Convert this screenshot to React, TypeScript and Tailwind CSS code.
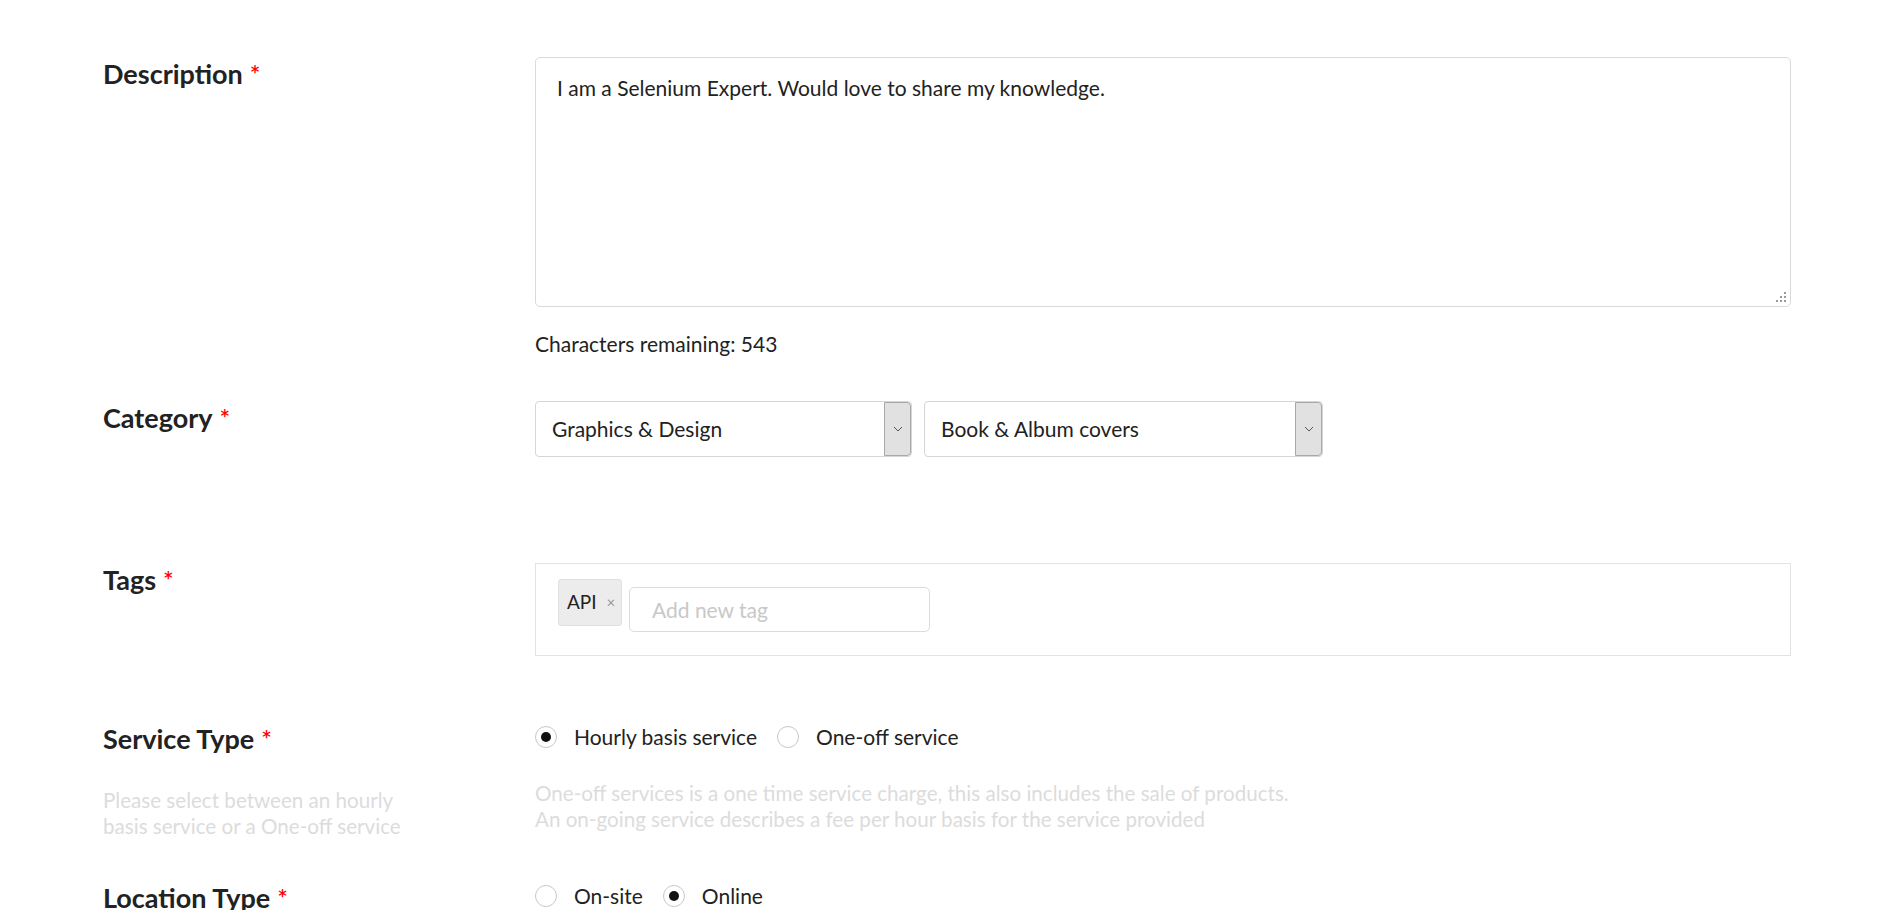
import React from "react";

const font = { fontFamily: "Lato, 'Open Sans', sans-serif" };

function Label({ text }: { text: string }) {
  return (
    <div className="w-[432px] shrink-0 text-[27px] leading-[34px] font-bold text-[#222]">
      {text}
      <span className="ml-[7px] text-[25px] leading-[34px] font-semibold text-[#ff0000]">*</span>
    </div>
  );
}

function Radio({ checked }: { checked: boolean }) {
  return (
    <span className="flex h-[22px] w-[22px] shrink-0 items-center justify-center rounded-full border border-[#c8c8c8] bg-white">
      {checked && <span className="h-[10px] w-[10px] rounded-full bg-[#111]" />}
    </span>
  );
}

function Chevron() {
  return (
    <svg width="10" height="6" viewBox="0 0 10 6" fill="none">
      <path d="M1 1l4 4 4-4" stroke="#555" strokeWidth="1" />
    </svg>
  );
}

function Select({ text, width }: { text: string; width: string }) {
  return (
    <div className={`flex h-[56px] ${width} items-stretch rounded-[4px] border border-[#d6d6d6] bg-white`}>
      <div className="flex flex-1 items-center pl-[16px] text-[21px] text-[#222]">{text}</div>
      <div className="flex w-[27px] items-center justify-center rounded-r-[4px] border border-[#a8a8a8] bg-[#e1e1e1]">
        <Chevron />
      </div>
    </div>
  );
}

export default function App() {
  return (
    <div className="min-h-[910px] bg-white pl-[103px] pt-[57px]" style={font}>
      {/* Description */}
      <div className="flex">
        <Label text="Description" />
        <div className="w-[1256px]">
          <div className="relative h-[250px] rounded-[5px] border border-[#dadada] bg-white pl-[21px] pt-[16px] text-[21px] leading-[28px] text-[#222]">
            I am a Selenium Expert. Would love to share my knowledge.
            <svg className="absolute bottom-[3px] right-[3px]" width="11" height="11" viewBox="0 0 11 11">
              <rect x="8" y="0" width="2" height="2" fill="#9a9a9a" />
              <rect x="4" y="4" width="2" height="2" fill="#9a9a9a" />
              <rect x="8" y="4" width="2" height="2" fill="#9a9a9a" />
              <rect x="0" y="8" width="2" height="2" fill="#9a9a9a" />
              <rect x="4" y="8" width="2" height="2" fill="#9a9a9a" />
              <rect x="8" y="8" width="2" height="2" fill="#9a9a9a" />
            </svg>
          </div>
          <div className="mt-[23px] text-[21px] leading-[28px] text-[#222]">Characters remaining: 543</div>
        </div>
      </div>

      {/* Category */}
      <div className="mt-[43px] flex">
        <Label text="Category" />
        <div className="flex gap-[12px]">
          <Select text="Graphics & Design" width="w-[377px]" />
          <Select text="Book & Album covers" width="w-[399px]" />
        </div>
      </div>

      {/* Tags */}
      <div className="mt-[106px] flex">
        <Label text="Tags" />
        <div className="flex h-[93px] w-[1256px] items-start gap-[7px] border border-[#e3e3e3] bg-white pl-[22px] pt-[15px]">
          <div className="flex h-[47px] w-[64px] items-center gap-[10px] rounded-[3px] border border-[#e0e0e0] bg-[#ececec] pl-[8px] text-[19px] text-[#222]">
            API
            <span className="text-[15px] text-[#999]">×</span>
          </div>
          <div className="mt-[8px] flex h-[45px] w-[301px] items-center rounded-[5px] border border-[#dcdcdc] bg-white pl-[22px] text-[21px] text-[#c8c8c8]">
            Add new tag
          </div>
        </div>
      </div>

      {/* Service Type */}
      <div className="mt-[66px] flex">
        <div className="w-[432px] shrink-0">
          <Label text="Service Type" />
          <div className="mt-[31px] text-[20.6px] leading-[26px] text-[#dcdcdc]">
            Please select between an hourly
            <br />
            basis service or a One-off service
          </div>
        </div>
        <div>
          <div className="-mt-[2px] flex h-[34px] items-center text-[21px] text-[#222]">
            <Radio checked />
            <span className="ml-[17px]">Hourly basis service</span>
            <span className="ml-[20px]"><Radio checked={false} /></span>
            <span className="ml-[17px]">One-off service</span>
          </div>
          <div className="mt-[26px] text-[20.6px] leading-[26px] text-[#dcdcdc]">
            One-off services is a one time service charge, this also includes the sale of products.
            <br />
            An on-going service describes a fee per hour basis for the service provided
          </div>
        </div>
      </div>

      {/* Location Type */}
      <div className="mt-[42px] flex">
        <Label text="Location Type" />
        <div className="-mt-[2px] flex h-[34px] items-center text-[21px] text-[#222]">
          <Radio checked={false} />
          <span className="ml-[17px]">On-site</span>
          <span className="ml-[20px]"><Radio checked /></span>
          <span className="ml-[17px]">Online</span>
        </div>
      </div>
    </div>
  );
}
